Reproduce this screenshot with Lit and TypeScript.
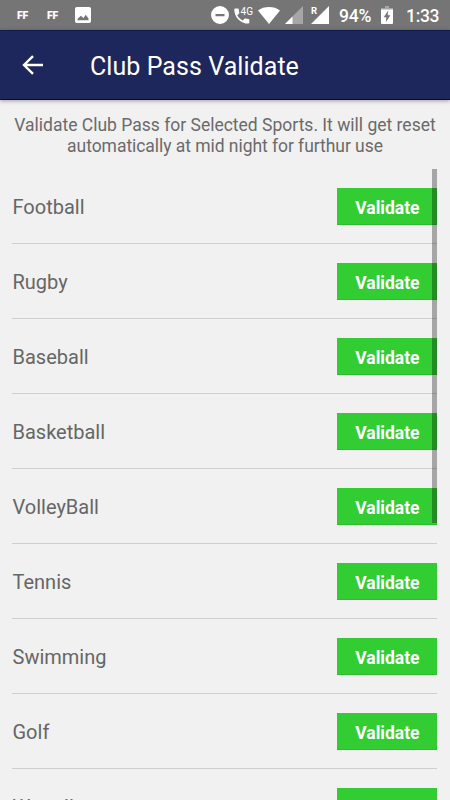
import { LitElement, html, css } from "lit";
import { customElement, property } from "lit/decorators.js";

const SPORTS = [
  "Football",
  "Rugby",
  "Baseball",
  "Basketball",
  "VolleyBall",
  "Tennis",
  "Swimming",
  "Golf",
  "Wrestling",
];

@customElement("status-bar")
class StatusBar extends LitElement {
  static styles = css`
    :host {
      display: flex;
      align-items: center;
      flex: none;
      height: 30px;
      box-sizing: border-box;
      padding: 0 9px 0 17px;
      background: #757575;
      color: #fff;
      font-size: 18px;
      line-height: 30px;
      white-space: nowrap;
    }
    svg {
      display: block;
      flex: none;
      fill: #fff;
      overflow: visible;
    }
    .ff {
      width: 30px;
      padding-top: 1px;
      font: 900 10.5px/30px Roboto, sans-serif;
      letter-spacing: -0.2px;
    }
    .picture {
      margin-left: -2px;
    }
    .system {
      display: flex;
      align-items: center;
      margin-left: auto;
    }
    .call {
      margin-left: 5px;
    }
    .wifi {
      margin-left: 5px;
    }
    .signal {
      margin-left: 5px;
    }
    .roaming {
      margin-left: 8px;
    }
    .percent {
      width: 33px;
      margin-left: 10px;
      padding-top: 2px;
      font-weight: 500;
      font-size: 17.5px;
      letter-spacing: -0.2px;
    }
    .battery {
      margin-left: 9px;
    }
    .time {
      width: 35px;
      margin-left: 13px;
      padding-top: 2px;
      font-size: 17.5px;
      font-weight: 500;
      letter-spacing: -0.3px;
    }
    text {
      font-family: Roboto, sans-serif;
    }
  `;

  render() {
    return html`
      <span class="ff">FF</span>
      <span class="ff">FF</span>
      <svg class="picture" width="16" height="16" viewBox="0 0 16 16">
        <path
          fill-rule="evenodd"
          d="M1.7 0h12.6Q16 0 16 1.7v12.6q0 1.7-1.7 1.7H1.7Q0 16 0 14.3V1.7Q0 0 1.700 0zM2.500 13.200h11V11.500L10.800 7.800 8.600 11 5.800 8.800 2.500 12z"
        />
      </svg>
      <div class="system">
        <svg width="18" height="18" viewBox="0 0 18 18">
          <path fill-rule="evenodd" d="M9 0a9 9 0 1 0 0 18A9 9 0 0 0 9 0zM4.5 8h9v2.2h-9z" />
        </svg>
        <svg class="call" width="19" height="18" viewBox="0 0 19 18">
          <path
            d="M3.3 9.2c1.2 2.3 3.1 4.2 5.4 5.4l1.8-1.8c.2-.2.6-.3.9-.2 1 .3 2.1.5 3.1.5.5 0 .8.4.8.8v2.9c0 .5-.3.8-.8.8C6.6 17.6.3 11.3.3 3.4c0-.5.4-.8.8-.8H4c.5 0 .8.3.8.8 0 1.1.2 2.1.5 3.1.1.3 0 .6-.2.9z"
          />
          <text x="6.5" y="9" font-size="11" textLength="12.5" lengthAdjust="spacingAndGlyphs">4G</text>
        </svg>
        <svg class="wifi" width="22" height="17" viewBox="0 0 22 17">
          <path d="M0 3.5C6-1.1 16-1.1 22 3.5L11 17z" />
        </svg>
        <svg class="signal" width="18" height="18" viewBox="0 0 18 18">
          <path fill="#a6a6a6" d="M18 0v18H0z" />
          <path d="M7.5 10.5V18H0z" />
        </svg>
        <svg class="roaming" width="18" height="18" viewBox="0 0 18 18">
          <path d="M18 0v18H0z" />
          <text x="0" y="7.5" font-size="9.5" font-weight="700">R</text>
        </svg>
        <span class="percent">94%</span>
        <svg class="battery" width="12" height="18" viewBox="0 0 12 18">
          <path fill="#a6a6a6" d="M4 0h4v2h4v2H0V2h4z" />
          <path
            fill-rule="evenodd"
            d="M0 3.5h12V17q0 1-1 1H1q-1 0-1-1zM7.2 4.6L2.7 11.2h2.6l-.5 5 4.6-7H6.7z"
          />
        </svg>
        <span class="time">1:33</span>
      </div>
    `;
  }
}

@customElement("title-bar")
class TitleBar extends LitElement {
  @property() heading = "";

  static styles = css`
    :host {
      display: flex;
      align-items: center;
      flex: none;
      position: relative;
      height: 70px;
      box-sizing: border-box;
      padding-left: 22px;
      background: #1e275c;
      border-top: 1px solid #111a56;
      border-bottom: 1px solid #080c43;
      box-shadow: 0 1px 4px rgba(0, 0, 0, 0.35);
      color: #fff;
    }
    svg {
      display: block;
      flex: none;
      fill: none;
      stroke: #fff;
      stroke-width: 2.4;
    }
    .heading {
      margin-left: 47px;
      padding-top: 3px;
      font-size: 25px;
      line-height: 30px;
      letter-spacing: 0.06px;
      white-space: nowrap;
    }
  `;

  render() {
    return html`
      <svg width="21" height="20" viewBox="0 0 21 20">
        <path d="M21 10H2.5M11 1.1L2 10l9 8.9" />
      </svg>
      <span class="heading">${this.heading}</span>
    `;
  }
}

@customElement("sport-row")
class SportRow extends LitElement {
  @property() name = "";

  static styles = css`
    :host {
      display: flex;
      align-items: center;
      justify-content: space-between;
      height: 75px;
      box-sizing: border-box;
      border-bottom: 1px solid #cfcfcf;
      color: #666;
      font-size: 20px;
    }
    .name {
      padding-left: 0.5px;
      padding-top: 2px;
    }
    button {
      width: 100px;
      height: 37px;
      margin: 1px 0 0;
      padding: 3px 0 0;
      border: 0;
      border-bottom: 1px solid #2abf2b;
      background: #32cd32;
      color: #fff;
      font: 700 17.5px Roboto, sans-serif;
    }
  `;

  render() {
    return html`<span class="name">${this.name}</span><button>Validate</button>`;
  }
}

@customElement("app-root")
class AppRoot extends LitElement {
  static styles = css`
    :host {
      display: flex;
      flex-direction: column;
      width: 450px;
      height: 800px;
      overflow: hidden;
      background: #f1f1f1;
      font-family: Roboto, sans-serif;
    }
    .note {
      flex: none;
      margin: 15px 12px 13px;
      color: #6a6a6a;
      font-size: 17.5px;
      line-height: 20.5px;
      text-align: center;
    }
    .second {
      letter-spacing: -0.05px;
    }
    .list {
      position: relative;
      flex: 1;
      min-height: 0;
      margin: 0 12.6px 0 12px;
      overflow: hidden;
    }
    .thumb {
      position: absolute;
      top: 0;
      right: 0;
      width: 5px;
      height: 354px;
      background: rgba(0, 0, 0, 0.31);
    }
  `;

  render() {
    return html`
      <status-bar></status-bar>
      <title-bar heading="Club Pass Validate"></title-bar>
      <div class="note">
        Validate Club Pass for Selected Sports. It will get reset<br /><span class="second"
          >automatically at mid night for furthur use</span
        >
      </div>
      <div class="list">
        ${SPORTS.map((sport) => html`<sport-row name=${sport}></sport-row>`)}
        <div class="thumb"></div>
      </div>
    `;
  }
}
